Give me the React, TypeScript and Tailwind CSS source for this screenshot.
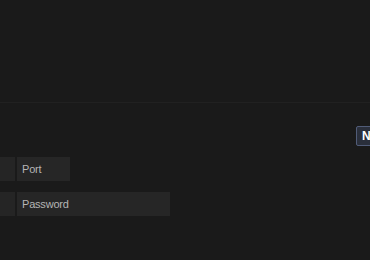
const Field = ({ label, width }: { label: string; width: string }) => (
	<div className="flex gap-[2px]">
		<div className="h-6 w-[60px] -ml-[45px] bg-[#252525] shrink-0" />
		<div
			className={`h-6 ${width} bg-[#262626] flex items-center pl-[5px] text-[11px] tracking-[-0.2px] text-[#b5b5b5]`}
		>
			{label}
		</div>
	</div>
);

const App = () => (
	<div
		className="w-[370px] h-[260px] overflow-hidden bg-[#1a1a1a]"
		style={{ fontFamily: '"Liberation Sans", Arial, sans-serif' }}
	>
		<div className="h-[103px] border-b border-[#212121]" />

		<div className="mt-[23px] ml-[356px] flex">
			<button className="h-5 px-[5px] whitespace-nowrap rounded-[2px] border border-[#515c78] bg-[#2a2f3b] text-[12px] font-bold text-white leading-none">
				New connection
			</button>
		</div>

		<div className="mt-[11px] flex flex-col gap-[11px]">
			<Field label="Port" width="w-[53px]" />
			<Field label="Password" width="w-[153px]" />
		</div>
	</div>
);

export default App;
